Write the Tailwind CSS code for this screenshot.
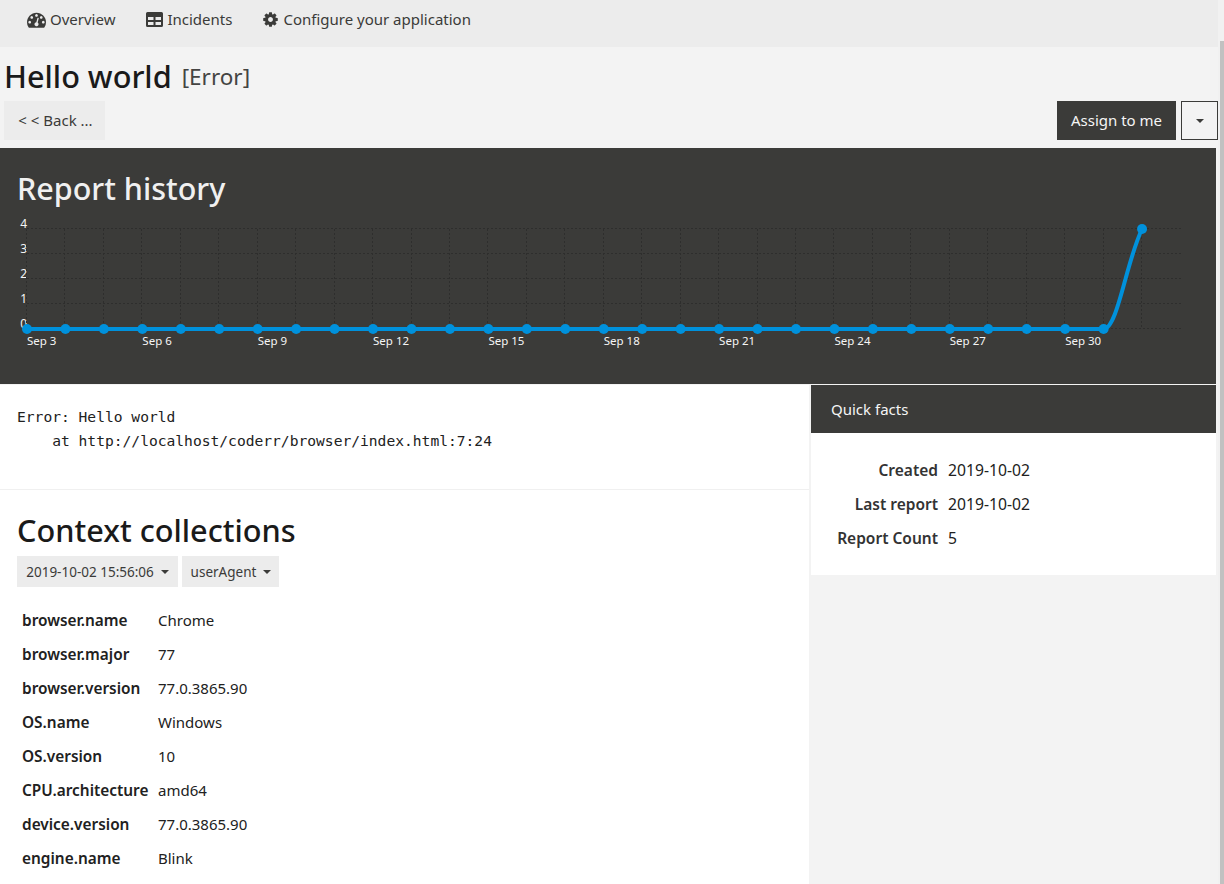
<!DOCTYPE html>
<html lang="en">
<head>
  <meta charset="UTF-8" />
  <title>Hello world - Coderr</title>
  <script src="https://cdn.jsdelivr.net/npm/@tailwindcss/browser@4"></script>
</head>
<body class="relative h-[884px] overflow-hidden bg-[#f3f3f3] font-['Noto_Sans',sans-serif] text-[15px] text-[#212121]">

  <!-- Top menu -->
  <nav class="flex h-[47px] w-[1218px] items-center bg-[#ececec] pb-[9px] text-[#3b3b39]">
    <a class="ml-[27px] flex items-center gap-[4px]">
      <svg class="h-[19px] w-[19px] fill-[#3b3b39]" viewBox="0 0 1792 1792"><path d="M384 1152q0-53-37.5-90.5t-90.5-37.5-90.5 37.5-37.5 90.5 37.5 90.5 90.5 37.5 90.5-37.5 37.5-90.5zm192-448q0-53-37.5-90.5t-90.5-37.5-90.5 37.5-37.5 90.5 37.5 90.5 90.5 37.5 90.5-37.5 37.5-90.5zm428 481l101-382q6-26-7.5-48.5t-38.5-29.5-48 6.5-30 39.5l-101 382q-60 5-107 43.5t-63 98.5q-20 77 20 146t117 89 146-20 89-117q16-60-6-117t-72-91zm660-33q0-53-37.5-90.5t-90.5-37.5-90.5 37.5-37.5 90.5 37.5 90.5 90.5 37.5 90.5-37.5 37.5-90.5zm-640-640q0-53-37.5-90.5t-90.5-37.5-90.5 37.5-37.5 90.5 37.5 90.5 90.5 37.5 90.5-37.5 37.5-90.5zm448 192q0-53-37.5-90.5t-90.5-37.5-90.5 37.5-37.5 90.5 37.5 90.5 90.5 37.5 90.5-37.5 37.5-90.5zm320 448q0 261-141 483-19 29-54 29h-1402q-35 0-54-29-141-221-141-483 0-182 71-348t191-286 286-191 348-71 348 71 286 191 191 286 71 348z"/></svg>
      <span>Overview</span>
    </a>
    <a class="ml-[31px] flex items-center gap-[4px]">
      <svg class="h-[15px] w-[17px] fill-[#3b3b39]" viewBox="0 0 17 15"><path fill-rule="evenodd" d="M1.5 0h14A1.5 1.5 0 0 1 17 1.5v12a1.5 1.5 0 0 1-1.5 1.5h-14A1.5 1.5 0 0 1 0 13.5v-12A1.5 1.5 0 0 1 1.5 0zM2 5v3h5.5V5zm7.5 0v3H15V5zM2 10v3h5.5v-3zm7.5 0v3H15v-3z"/></svg>
      <span>Incidents</span>
    </a>
    <a class="ml-[30px] flex items-center gap-[4px]">
      <svg class="h-[17px] w-[17px] fill-[#3b3b39]" viewBox="0 0 1792 1792"><path d="M1152 896q0-106-75-181t-181-75-181 75-75 181 75 181 181 75 181-75 75-181zm512-109v222q0 12-8 23t-20 13l-185 28q-19 54-39 91 35 50 107 138 10 12 10 25t-9 23q-27 37-99 108t-94 71q-12 0-26-9l-138-108q-44 23-91 38-16 136-29 186-7 28-36 28h-222q-14 0-24.5-8.5t-11.5-21.5l-28-184q-49-16-90-37l-141 107q-10 9-25 9-14 0-25-11-126-114-165-168-7-10-7-23 0-12 8-23 15-21 51-66.5t54-70.5q-27-50-41-99l-183-27q-13-2-21-12.5t-8-23.5v-222q0-12 8-23t19-13l186-28q14-46 39-92-40-57-107-138-10-12-10-24 0-10 9-23 26-36 98.5-107.5t94.5-71.5q13 0 26 10l138 107q44-23 91-38 16-136 29-186 7-28 36-28h222q14 0 24.5 8.5t11.5 21.5l28 184q49 16 90 37l142-107q9-9 24-9 13 0 25 10 129 119 165 170 7 8 7 22 0 12-8 23-15 21-51 66.5t-54 70.5q26 50 41 98l183 28q13 2 21 12.5t8 23.5z"/></svg>
      <span>Configure your application</span>
    </a>
  </nav>

  <!-- Title + actions -->
  <header class="w-[1218px]">
    <div class="flex h-[54px] items-center gap-[10px] pl-[4px] pt-[4px]">
      <h1 class="text-[30.7px] leading-none font-medium text-[#1a1a1a]">Hello world</h1>
      <span class="mt-[2px] text-[22.5px] leading-none text-[#444442]">[Error]</span>
    </div>
    <div class="flex h-[39px] items-stretch pl-[4px]">
      <button class="w-[101px] bg-[#ececec] pl-[2px] text-[#3b3b39]">&lt; &lt; Back ...</button>
      <button class="ml-auto w-[119px] bg-[#3b3b39] text-[#f5f5f5]">Assign to me</button>
      <button class="ml-[5px] flex w-[37px] items-center justify-center border border-[#3b3b39]">
        <span class="h-0 w-0 border-x-[4.5px] border-t-[4.5px] border-x-transparent border-t-[#3b3b39]"></span>
      </button>
    </div>
  </header>

  <!-- Report history -->
  <section class="mt-[8px] h-[236px] w-[1216px] bg-[#3b3b39] pt-[21px]">
    <h2 class="pl-[17px] text-[30.5px] leading-[38px] font-medium text-[#f0f0f0]">Report history</h2>
    <svg id="chart" class="mt-[-59px] block" width="1216" height="236" viewBox="0 148 1216 236"></svg>
  </section>

  <main class="mt-[1px] flex h-[499px] w-[1217px]">
    <!-- Left column -->
    <div class="w-[809px] bg-white">
      <pre class="h-[105px] border-b border-[#f0f0f0] pl-[17px] pt-[20px] font-['DejaVu_Sans_Mono',monospace] text-[14.62px] leading-[24px] text-[#212121]">Error: Hello world
    at http://localhost/coderr/browser/index.html:7:24</pre>
      <div class="pl-[17px] pt-[20px]">
        <h2 class="text-[30.7px] leading-[40px] font-medium text-[#1a1a1a]">Context collections</h2>
        <div class="mt-[6px] flex gap-[4px] text-[13.5px] text-[#3b3b39]">
          <button class="flex h-[31px] w-[161px] items-center justify-center gap-[7px] bg-[#ececec] pt-[1px]">
            2019-10-02 15:56:06
            <span class="h-0 w-0 border-x-[4.5px] border-t-[4.5px] border-x-transparent border-t-[#3b3b39]"></span>
          </button>
          <button class="flex h-[31px] w-[97px] items-center justify-center gap-[7px] bg-[#ececec] pt-[1px] pl-[1px]">
            userAgent
            <span class="h-0 w-0 border-x-[4.5px] border-t-[4.5px] border-x-transparent border-t-[#3b3b39]"></span>
          </button>
        </div>
        <table class="mt-[16px] ml-[5px]">
          <tbody>
            <tr class="h-[34px]"><th class="w-[136px] pt-[2px] text-left text-[15.4px] font-semibold">browser.name</th><td>Chrome</td></tr>
            <tr class="h-[34px]"><th class="pt-[2px] text-left text-[15.4px] font-semibold">browser.major</th><td>77</td></tr>
            <tr class="h-[34px]"><th class="pt-[2px] text-left text-[15.4px] font-semibold">browser.version</th><td>77.0.3865.90</td></tr>
            <tr class="h-[34px]"><th class="pt-[2px] text-left text-[15.4px] font-semibold">OS.name</th><td>Windows</td></tr>
            <tr class="h-[34px]"><th class="pt-[2px] text-left text-[15.4px] font-semibold">OS.version</th><td>10</td></tr>
            <tr class="h-[34px]"><th class="pt-[2px] text-left text-[15.4px] font-semibold">CPU.architecture</th><td>amd64</td></tr>
            <tr class="h-[34px]"><th class="pt-[2px] text-left text-[15.4px] font-semibold">device.version</th><td>77.0.3865.90</td></tr>
            <tr class="h-[34px]"><th class="pt-[2px] text-left text-[15.4px] font-semibold">engine.name</th><td>Blink</td></tr>
          </tbody>
        </table>
      </div>
    </div>

    <!-- Quick facts -->
    <aside class="ml-[2px] w-[405px] self-start bg-white">
      <div class="flex h-[48px] items-center bg-[#3b3b39] pl-[20px] text-[#f5f5f5]">Quick facts</div>
      <table class="mt-[20px] mb-[20px]">
        <tbody>
          <tr class="h-[34px]"><th class="w-[137px] pt-[2px] pr-[10px] text-right text-[15.5px] font-semibold text-[#333]">Created</th><td class="pt-[2px] text-[15.7px]">2019-10-02</td></tr>
          <tr class="h-[34px]"><th class="pt-[2px] pr-[10px] text-right text-[15.5px] font-semibold text-[#333]">Last report</th><td class="pt-[2px] text-[15.7px]">2019-10-02</td></tr>
          <tr class="h-[34px]"><th class="pt-[2px] pr-[10px] text-right text-[15.5px] font-semibold text-[#333]">Report Count</th><td class="pt-[2px] text-[15.7px]">5</td></tr>
        </tbody>
      </table>
    </aside>
  </main>

  <!-- Window scrollbar -->
  <div class="absolute top-0 right-0 h-[884px] w-[6px] bg-[#f1f1f1]">
    <div class="absolute top-[41px] right-0 bottom-0 w-[4px] bg-[#c1c1c1]"></div>
  </div>

  <script>
    const svg = document.getElementById('chart');
    const left = 27, step = 38.45, count = 30, top0 = 229, rowH = 25;
    let out = '';

    // grid
    for (let i = 0; i <= 4; i++) {
      const y = top0 + i * rowH;
      out += `<line x1="${left}" x2="1181" y1="${y - 0.5}" y2="${y - 0.5}" stroke="#2e2e2d" stroke-dasharray="2 2" />`;
      out += `<text x="27" y="${y - 1}" text-anchor="end" fill="#f5f5f5" font-size="12">${4 - i}</text>`;
    }
    for (let i = 0; i < count; i++) {
      const x = Math.round(left + i * step) - 0.5;
      out += `<line x1="${x}" x2="${x}" y1="${top0}" y2="329" stroke="#2e2e2d" stroke-dasharray="2 2" />`;
    }

    // series
    const lastFlat = left + 28 * step, end = left + 29 * step;
    out += `<path d="M${left} 329H${lastFlat}C${lastFlat + 14} 329 ${end - 16} 262 ${end} 229" fill="none" stroke="#0091dc" stroke-width="4" />`;
    for (let i = 0; i < count; i++) {
      const x = left + i * step;
      out += `<circle cx="${x}" cy="${i == 29 ? 229 : 329}" r="5" fill="#0091dc" />`;
      if (i % 3 == 0 && i < 28) {
        out += `<text x="${x}" y="345" fill="#f5f5f5" font-size="11.5">Sep ${i + 3}</text>`;
      }
    }
    svg.innerHTML = out;
  </script>
</body>
</html>
